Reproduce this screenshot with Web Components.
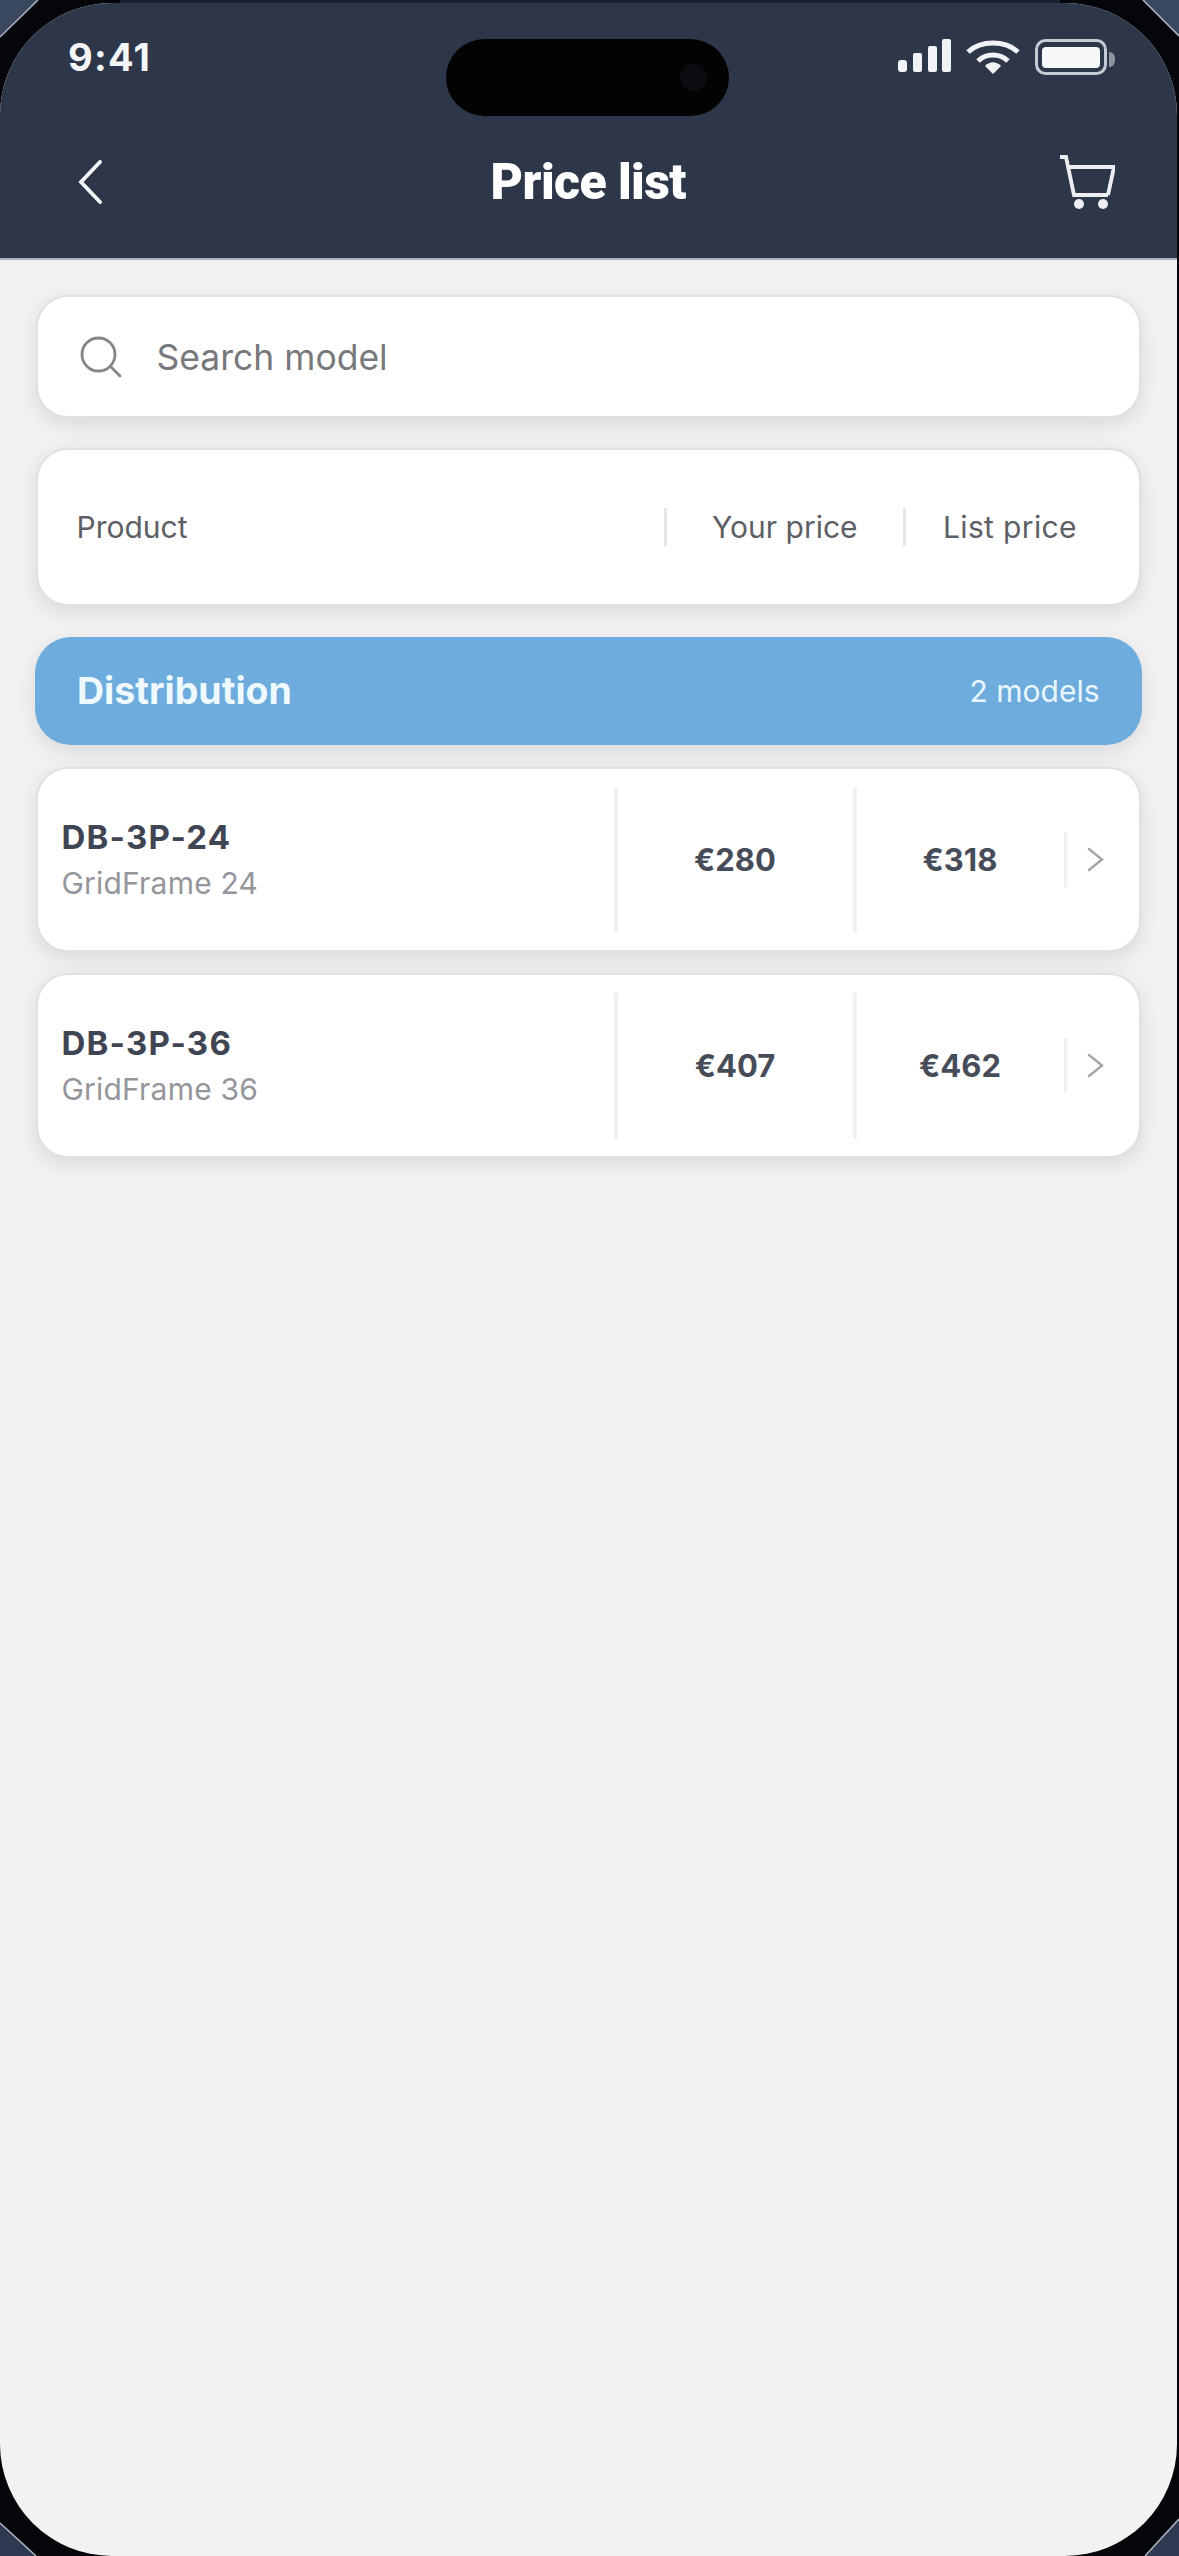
<!DOCTYPE html>
<html lang="en"><head><meta charset="utf-8"><title>Price list</title>
<style>
html,body{margin:0;padding:0;background:#05060a;}
body{width:1179px;height:2556px;overflow:hidden;font-family:Inter,"Liberation Sans",sans-serif;}
</style></head>
<body>
<phone-frame>
  <app-header>
    <status-bar></status-bar>
    <nav-bar>Price list</nav-bar>
  </app-header>
  <price-page>
    <search-box>Search model</search-box>
    <price-head></price-head>
    <category-bar><span slot="count">2 models</span>Distribution</category-bar>
    <price-row><span slot="name">DB-3P-24</span><span slot="sub">GridFrame 24</span><span slot="your">€280</span><span slot="list">€318</span></price-row>
    <price-row><span slot="name">DB-3P-36</span><span slot="sub">GridFrame 36</span><span slot="your">€407</span><span slot="list">€462</span></price-row>
  </price-page>
</phone-frame>
<script>
function def(name, html){
  customElements.define(name, class extends HTMLElement{
    constructor(){super();this.attachShadow({mode:'open'}).innerHTML=html;}
  });
}
def('phone-frame',`<style>
:host{display:block;position:relative;width:1179px;height:2556px;background:#05060a;overflow:hidden}
.screen{width:1176.5px;height:2553px;margin-top:3px;border-radius:112px;background:#f2f2f3;overflow:hidden;display:flex;flex-direction:column}
.top{position:absolute;left:120px;top:0;width:940px;height:3px;background:#1b2132}
svg{position:absolute;width:50px;height:50px}
</style>
<div class="top"></div>
<div class="screen"><slot></slot></div>
<svg style="left:0;top:0" viewBox="0 0 50 50"><path d="M0 0H38L0 37Z" fill="#39485e"/><path d="M38 0L0 37" stroke="#aab0ba" stroke-width="1.6"/></svg>
<svg style="right:0;top:0" viewBox="0 0 50 50"><path d="M50 0H14L50 36Z" fill="#39485e"/><path d="M14 0L50 36" stroke="#aab0ba" stroke-width="1.6"/></svg>
<svg style="left:0;bottom:0" viewBox="0 0 50 50"><path d="M0 50H36L0 17Z" fill="#2c3950"/><path d="M36 50L0 17" stroke="#aab0ba" stroke-width="1.6"/></svg>
<svg style="right:0;bottom:0" viewBox="0 0 50 50"><path d="M50 50H16L50 13Z" fill="#2c3950"/><path d="M16 50L50 13" stroke="#aab0ba" stroke-width="1.6"/></svg>`);
def('app-header',`<style>
:host{display:block;position:relative;background:#2e3749;height:255px;border-bottom:2px solid #aeb2ba;box-sizing:content-box}
.island{position:absolute;left:446px;top:36px;width:283px;height:77px;border-radius:39px;background:#030304}
.cam{position:absolute;right:22px;top:25px;width:27px;height:27px;border-radius:50%;background:#0a0b10}
</style><slot></slot><div class="island"><div class="cam"></div></div>`);
def('status-bar',`<style>
:host{display:flex;justify-content:space-between;align-items:flex-start;padding:36px 62px 0 68px;height:36px}
.t{font:700 38px/36px Inter,sans-serif;color:#f4f5f7;letter-spacing:1.3px}
.i{display:flex;gap:15px;height:36px}
</style><div class="t">9:41</div><div class="i">
<svg width="53" height="36" viewBox="0 0 53 36" fill="#f2f3f6"><rect x="0" y="21" width="9" height="12" rx="3"/><rect x="15" y="14" width="9" height="19" rx="2"/><rect x="30" y="7" width="9" height="26" rx="2"/><rect x="44" y="0" width="9" height="33" rx="2"/></svg>
<svg width="54" height="36" viewBox="0 0 54 36" fill="none" stroke="#f2f3f6" stroke-width="5"><path d="M2 13C15 1 39 1 52 13"/><path d="M12 22C20 14 34 14 42 22"/><path d="M19 27L27 35L35 27C30 22 24 22 19 27Z" fill="#f2f3f6" stroke="none"/></svg>
<svg width="80" height="36" viewBox="0 0 80 36"><rect x="1.5" y="1.5" width="69" height="33" rx="9" fill="none" stroke="#c6cad2" stroke-width="3"/><rect x="7" y="8" width="58" height="21" rx="4" fill="#f6f7f9"/><path d="M74 13C78 13 80 16 80 20C80 25 78 28 74 28Z" fill="#8f949e"/></svg>
</div>`);
def('nav-bar',`<style>
:host{display:grid;grid-template-columns:1fr auto 1fr;align-items:center;padding:0 62px;height:110px;margin-top:52px}
.t{font:900 50px/1 Roboto,sans-serif;color:#fff;letter-spacing:-.6px}
.b{margin-left:16px}
.c{justify-self:end}
svg{display:block}
</style>
<svg class="b" width="24" height="44" viewBox="0 0 24 44" fill="none" stroke="#f4f5f7" stroke-width="3.8" stroke-linecap="round"><path d="M22 2L3 22L22 42"/></svg>
<div class="t"><slot></slot></div>
<svg class="c" width="56" height="54" viewBox="0 0 56 54" fill="none" stroke="#eceef2" stroke-width="3.8"><path d="M1 2H7L15 40H49" stroke-linejoin="miter"/><path d="M9 12H55L49 40" /><circle cx="20" cy="49" r="5" fill="#eceef2" stroke="none"/><circle cx="44" cy="49" r="5" fill="#eceef2" stroke="none"/></svg>`);
def('price-page',`<style>
:host{display:flex;flex-direction:column;padding:35px 36px 0 36px}
</style><slot></slot>`);
const card=`background:#fff;border:2.5px solid #e1e1e4;border-radius:32px;box-sizing:border-box;box-shadow:0 6px 20px rgba(40,45,55,.12);`;
def('search-box',`<style>
:host{display:flex;align-items:center;height:123px;${card}padding-left:41.5px;gap:35px;font:400 35.5px/1 Inter,sans-serif;color:#77787c}
span{padding-top:2px}
svg{display:block;flex:none}
</style><svg width="42" height="42" viewBox="0 0 42 42" fill="none" stroke="#85868a" stroke-width="2.8" stroke-linecap="round"><circle cx="18.5" cy="18.5" r="16.5"/><path d="M30.5 30.5L40 40"/></svg><span><slot></slot></span>`);
def('price-head',`<style>
:host{display:grid;grid-template-columns:587.5px 239px 1fr;align-items:center;height:158px;margin-top:30px;${card}padding-left:38.5px;font:400 30px/1 Inter,sans-serif;color:#5d5f65}
div{display:flex;align-items:center;height:38px}
.d{border-left:3px solid #e6e6e8;padding-left:45px}
.e{padding-left:37px;letter-spacing:.35px}
</style><div>Product</div><div class="d">Your price</div><div class="d e">List price</div>`);
def('category-bar',`<style>
:host{display:flex;justify-content:space-between;align-items:center;height:108px;margin:31px -1px 0 -1px;padding:0 42px;background:#6dacdc;border-radius:36px;box-shadow:0 6px 20px rgba(40,45,55,.12);font:400 30px/1 Inter,sans-serif;color:#e9f6ff}
.n{font:700 37.5px/1 Inter,sans-serif;color:#eefaff}
</style><span class="n"><slot></slot></span><span><slot name="count"></slot></span>`);
def('price-row',`<style>
:host{display:grid;grid-template-columns:575.5px 239px 211px 1fr;align-items:center;height:185px;margin-top:22px;${card}font:700 32px/1 Inter,sans-serif;color:#474c59}
:host(:last-child){margin-top:21px}
.a{padding-left:23.5px;display:flex;flex-direction:column;gap:14px}
.s{font:400 30px/1 Inter,sans-serif;color:#94969b;letter-spacing:.2px}
.n{font-size:33px;letter-spacing:1.2px;color:#3f4552}
.p{display:flex;align-items:center;justify-content:center;height:146px;border-left:4px solid #f0f0f1;font-size:31px}
.c{display:flex;align-items:center;height:55px;border-left:3px solid #f0f0f1;padding-left:20px}
svg{display:block}
</style><div class="a"><span class="n"><slot name="name"></slot></span><span class="s"><slot name="sub"></slot></span></div>
<div class="p"><slot name="your"></slot></div><div class="p"><slot name="list"></slot></div>
<div class="c"><svg width="17" height="25" viewBox="0 0 17 25" fill="none" stroke="#a3a5aa" stroke-width="2.4" stroke-linecap="round"><path d="M2 2L15 12.5L2 23"/></svg></div>`);
</script>
</body></html>
